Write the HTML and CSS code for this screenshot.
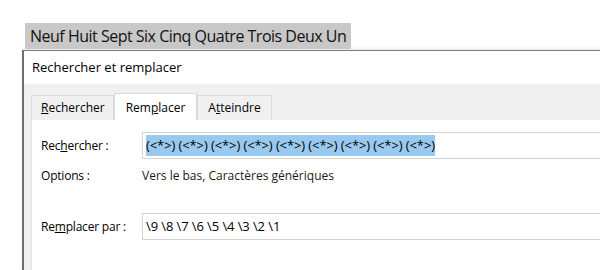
FILE: index.html
```html
<!DOCTYPE html>
<html lang="fr">
<head>
    <meta charset="UTF-8">
    <title>Rechercher et remplacer</title>
    <link rel="stylesheet" href="styles.css">
</head>
<body>
    <div class="doc">
        <span class="doc-line">Neuf Huit Sept Six Cinq Quatre Trois Deux Un</span>
    </div>

    <div class="dialog">
        <div class="titlebar">Rechercher et remplacer</div>
        <div class="dialog-body">
            <div class="tabs">
                <div class="tab"><u>R</u>echercher</div>
                <div class="tab active">Rem<u>p</u>lacer</div>
                <div class="tab last">A<u>t</u>teindre</div>
            </div>
            <div class="panel">
                <div class="row">
                    <label class="label">Rec<u>h</u>ercher :</label>
                    <div class="field"><span class="selected">(&lt;*&gt;) (&lt;*&gt;) (&lt;*&gt;) (&lt;*&gt;) (&lt;*&gt;) (&lt;*&gt;) (&lt;*&gt;) (&lt;*&gt;) (&lt;*&gt;)</span></div>
                </div>
                <div class="row options">
                    <span class="label">Options :</span>
                    <span class="value">Vers le bas, Caractères génériques</span>
                </div>
                <div class="row replace">
                    <label class="label">Re<u>m</u>placer par :</label>
                    <div class="field">\9 \8 \7 \6 \5 \4 \3 \2 \1</div>
                </div>
            </div>
        </div>
    </div>
</body>
</html>
```

FILE: styles.css
```css
* {
    margin: 0;
    padding: 0;
    box-sizing: border-box;
}

body {
    font-family: 'Open Sans', 'Noto Sans', sans-serif;
    background: #ffffff;
    color: #1a1a1a;
    width: 600px;
    height: 270px;
    overflow: hidden;
}

.doc {
    padding: 23px 0 0 25px;
    height: 50px;
}

.doc-line {
    display: inline-block;
    background: #c8c8c8;
    font-size: 16px;
    letter-spacing: -0.5px;
    line-height: 26px;
    height: 26px;
    padding: 0 5px;
    color: #111;
}

.dialog {
    margin-left: 22px;
    border-left: 2px solid #6e6e6e;
    border-top: 1px solid #7a7a7a;
    box-shadow: 0 -2px 3px rgba(0, 0, 0, 0.08);
    height: 220px;
}

.titlebar {
    background: #ffffff;
    height: 33px;
    line-height: 32px;
    padding-left: 8px;
    font-size: 13px;
    color: #000;
}

.dialog-body {
    background: #f0f0f0;
    padding: 9px 0 0 7px;
    height: 187px;
    display: flex;
    flex-direction: column;
}

.tabs {
    display: flex;
    align-items: flex-end;
    height: 27px;
    font-size: 12px;
}

.tab {
    height: 25px;
    line-height: 24px;
    padding: 0 8px 0 9px;
    border: 1px solid #dadada;
    border-bottom: none;
    background: #f0f0f0;
    margin-right: 2px;
    color: #000;
}

.tab + .tab {
    margin-left: -2px;
}

.tab.active {
    height: 27px;
    background: #ffffff;
    border-color: #dadada;
    padding: 0 11px 0 11px;
    line-height: 28px;
}

.tab.last {
    padding: 0 10px 0 10px;
}

.panel {
    flex: 1;
    background: #ffffff;
    border-left: 1px solid #e3e3e3;
    padding: 12px 0 0 9px;
    font-size: 12px;
}

.row {
    display: flex;
    align-items: center;
    height: 27px;
}

.label {
    width: 101px;
    flex-shrink: 0;
    color: #000;
    letter-spacing: -0.2px;
}

.field {
    flex: 1;
    height: 27px;
    border: 1px solid #d4d4d4;
    border-right: none;
    background: #fff;
    padding: 0 0 0 3px;
    line-height: 25px;
    font-size: 13px;
    letter-spacing: -0.1px;
    white-space: nowrap;
    overflow: hidden;
    color: #000;
}

.selected {
    background: #99c9ef;
    display: inline-block;
    line-height: 21px;
    margin-top: 2px;
}

.options {
    height: 30px;
    padding-top: 2px;
}

.replace {
    margin-top: 24px;
}
```
